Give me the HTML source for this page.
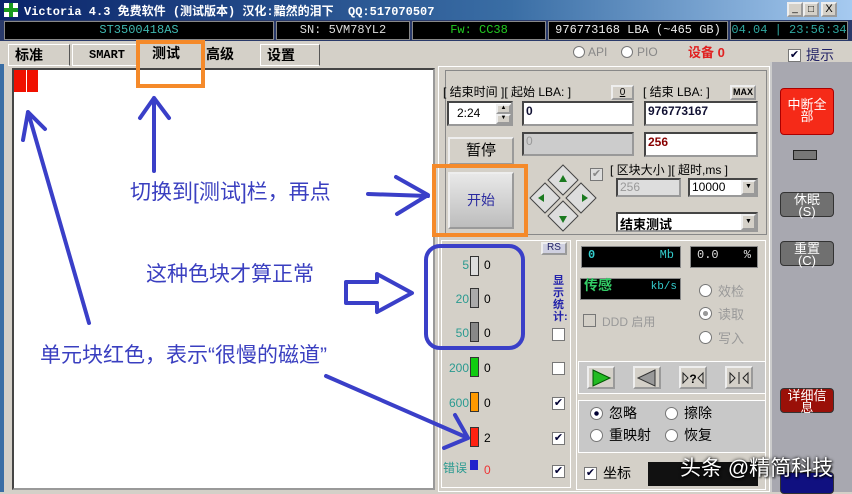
<!DOCTYPE html><html><head><meta charset="utf-8"><style>
*{margin:0;padding:0;box-sizing:border-box}
body{width:852px;height:492px;overflow:hidden;background:#d4d0c8;position:relative;font-family:"Liberation Sans","Noto Sans CJK SC",sans-serif;font-size:12px}
.a{position:absolute;white-space:nowrap}
.blk{background:#000;border:1px solid #888;color:#3fb8b0;font-family:"Liberation Mono","Noto Sans CJK SC",monospace;font-size:12px;text-align:center;line-height:17px}
.in{background:#fff;border:2px inset #999}
.btn{background:#d4d0c8;border:2px outset #eee;text-align:center}
.ann{color:#3a3fc0;font-size:21px;white-space:nowrap}
.rb{position:absolute;border-radius:4px;color:#fff;text-align:center;font-size:13px;line-height:12px;border:1px solid #333}
.chk{position:absolute;width:13px;height:13px;background:#fff;border:1px solid #777;font-size:11px;line-height:11px;text-align:center;color:#003}
.rad{position:absolute;width:13px;height:13px;border-radius:50%;background:#fff;border:1px solid #777}
.lbl{font-size:12px;line-height:14px}
</style></head><body>
<div class="a" style="left:0;top:0;width:852px;height:20px;background:linear-gradient(90deg,#0a246a,#3a6ea5 60%,#a6caf0)"></div>
<div class="a" style="left:4px;top:3px;width:14px;height:14px;background:#fff"><div class="a" style="left:5px;top:0;width:4px;height:14px;background:#1a9a20"></div><div class="a" style="left:0;top:5px;width:14px;height:4px;background:#1a9a20"></div></div>
<div class="a" style="left:24px;top:2px;color:#fff;font-weight:bold;font-size:12px;font-family:'Liberation Mono','Noto Sans CJK SC',monospace">Victoria 4.3 免费软件 (测试版本) 汉化:黯然的泪下 &nbsp;QQ:517070507</div>
<div class="a btn" style="left:787px;top:2px;width:16px;height:15px;font-size:10px;line-height:10px">_</div>
<div class="a btn" style="left:803px;top:2px;width:16px;height:15px;font-size:10px;line-height:11px">□</div>
<div class="a btn" style="left:821px;top:2px;width:16px;height:15px;font-size:11px;line-height:11px">X</div>
<div class="a" style="left:0;top:20px;width:852px;height:21px;background:#2a3a6a"></div>
<div class="a blk" style="left:4px;top:21px;width:270px;height:19px">ST3500418AS</div>
<div class="a blk" style="left:276px;top:21px;width:134px;height:19px;color:#ddd">SN: 5VM78YL2</div>
<div class="a blk" style="left:412px;top:21px;width:134px;height:19px;color:#2c2">Fw: CC38</div>
<div class="a blk" style="left:548px;top:21px;width:180px;height:19px;color:#eee">976773168 LBA (~465 GB)</div>
<div class="a blk" style="left:730px;top:21px;width:118px;height:19px;color:#2fa8a0">04.04 | 23:56:34</div>
<div class="a" style="left:0;top:41px;width:852px;height:25px;background:#d4d0c8"></div>
<div class="a" style="left:8px;top:44px;width:62px;height:22px;border:1px solid #fff;border-right-color:#555;font-weight:bold;font-size:14px;padding-left:6px">标准</div>
<div class="a" style="left:72px;top:44px;width:66px;height:22px;border:1px solid #fff;border-right-color:#555;font-weight:bold;font-size:12px;padding:3px 0 0 16px;font-family:'Liberation Mono',monospace">SMART</div>
<div class="a" style="left:140px;top:41px;width:62px;height:25px;font-weight:bold;font-size:14px;padding:2px 0 0 12px">测试</div>
<div class="a" style="left:204px;top:44px;width:54px;height:22px;font-weight:bold;font-size:14px;padding-left:2px">高级</div>
<div class="a" style="left:260px;top:44px;width:60px;height:22px;border:1px solid #fff;border-right-color:#555;font-weight:bold;font-size:14px;padding-left:6px">设置</div>
<div class="rad" style="left:573px;top:46px;width:12px;height:12px"></div><div class="a" style="left:588px;top:45px;color:#888">API</div>
<div class="rad" style="left:621px;top:46px;width:12px;height:12px"></div><div class="a" style="left:637px;top:45px;color:#888">PIO</div>
<div class="a" style="left:688px;top:42px;color:#e02020;font-weight:bold;font-size:13px">设备 0</div>
<div class="chk" style="left:788px;top:49px">✔</div><div class="a" style="left:806px;top:45px;font-size:14px;color:#226">提示</div>
<div class="a" style="left:0;top:64px;width:4px;height:428px;background:#3a6ea5"></div>
<div class="a" style="left:12px;top:68px;width:423px;height:422px;background:#fff;border:2px inset #999"></div>
<div class="a" style="left:14px;top:70px;width:12px;height:22px;background:#f01000"></div>
<div class="a" style="left:27px;top:70px;width:11px;height:22px;background:#f01000"></div>
<div class="a" style="left:438px;top:66px;width:332px;height:426px;background:#d4d0c8;border:1px solid #fff"></div>
<div class="a" style="left:445px;top:70px;width:322px;height:165px;border:1px solid #888"></div>
<div class="a lbl" style="left:443px;top:85px">[ 结束时间 ][ 起始 LBA: ]</div>
<div class="a btn" style="left:611px;top:85px;width:23px;height:15px;font-size:10px;line-height:11px;text-decoration:underline">0</div>
<div class="a lbl" style="left:643px;top:85px">[ 结束 LBA: ]</div>
<div class="a btn" style="left:730px;top:85px;width:26px;height:15px;font-size:9px;line-height:11px;font-weight:bold">MAX</div>
<div class="a in" style="left:447px;top:101px;width:66px;height:25px;padding:3px 0 0 8px">2:24</div>
<div class="a btn" style="left:496px;top:104px;width:15px;height:10px;font-size:6px;line-height:5px">▲</div>
<div class="a btn" style="left:496px;top:114px;width:15px;height:10px;font-size:6px;line-height:5px">▼</div>
<div class="a in" style="left:522px;top:101px;width:112px;height:25px;font-weight:bold;color:#113;padding:1px 2px">0</div>
<div class="a in" style="left:644px;top:101px;width:114px;height:25px;font-weight:bold;color:#113;padding:1px 2px">976773167</div>
<div class="a in" style="left:522px;top:132px;width:112px;height:24px;background:#ccc;color:#999;padding:0 2px">0</div>
<div class="a in" style="left:644px;top:132px;width:114px;height:25px;font-weight:bold;color:#800;padding:1px 2px">256</div>
<div class="a btn" style="left:448px;top:137px;width:66px;height:28px;font-size:15px;line-height:24px">暂停</div>
<div class="a btn" style="left:448px;top:172px;width:66px;height:57px;font-size:14px;line-height:53px;color:#2a2aa0;background:linear-gradient(#e8e8e8,#bdbdbd)">开始</div>
<svg class="a" style="left:528px;top:163px" width="70" height="72"><g stroke="#444" fill="#ddd"><polygon points="35,2 50,17 35,32 20,17"/><polygon points="17,20 32,35 17,50 2,35"/><polygon points="53,20 68,35 53,50 38,35"/><polygon points="35,38 50,53 35,68 20,53"/></g><g fill="#1a7a20"><polygon points="35,12 39,19 31,19"/><polygon points="10,35 16,31 16,39"/><polygon points="60,35 54,31 54,39"/><polygon points="35,60 39,53 31,53"/></g></svg>
<div class="chk" style="left:590px;top:168px;background:#ddd;color:#888">✔</div>
<div class="a lbl" style="left:610px;top:163px">[ 区块大小 ][ 超时,ms ]</div>
<div class="a in" style="left:616px;top:178px;width:65px;height:19px;background:#ddd;color:#999;padding:0 2px">256</div>
<div class="a in" style="left:688px;top:178px;width:70px;height:19px;padding:0 2px">10000</div>
<div class="a btn" style="left:741px;top:180px;width:15px;height:15px;font-size:7px;line-height:10px">▼</div>
<div class="a in" style="left:616px;top:212px;width:142px;height:20px;font-weight:bold;font-size:13px;padding:0 2px">结束测试</div>
<div class="a btn" style="left:741px;top:214px;width:15px;height:16px;font-size:7px;line-height:11px">▼</div>
<div class="a" style="left:441px;top:240px;width:130px;height:248px;border:1px solid #fff"></div>
<div class="a btn" style="left:541px;top:242px;width:26px;height:13px;font-size:10px;line-height:8px;color:#226;background:#cfd0e0">RS</div>
<div class="a" style="left:449px;top:256px;width:120px;font-size:12px;color:#2a9a90;line-height:14px">
<div class="a" style="left:8px;top:2px;width:12px;text-align:right">5</div><div class="a" style="left:21px;top:0;width:9px;height:20px;background:#ddd;border:1px solid #333"></div><div class="a" style="left:35px;top:2px;color:#000">0</div>
<div class="a" style="left:0;top:36px;width:20px;text-align:right">20</div><div class="a" style="left:21px;top:32px;width:9px;height:20px;background:#aaa;border:1px solid #333"></div><div class="a" style="left:35px;top:36px;color:#000">0</div>
<div class="a" style="left:0;top:70px;width:20px;text-align:right">50</div><div class="a" style="left:21px;top:66px;width:9px;height:20px;background:#888;border:1px solid #333"></div><div class="a" style="left:35px;top:70px;color:#000">0</div>
<div class="a" style="left:-4px;top:105px;width:24px;text-align:right">200</div><div class="a" style="left:21px;top:101px;width:9px;height:20px;background:#1c1;border:1px solid #333"></div><div class="a" style="left:35px;top:105px;color:#000">0</div>
<div class="a" style="left:-4px;top:140px;width:24px;text-align:right">600</div><div class="a" style="left:21px;top:136px;width:9px;height:20px;background:#f90;border:1px solid #333"></div><div class="a" style="left:35px;top:140px;color:#000">0</div>
<div class="a" style="left:21px;top:171px;width:9px;height:20px;background:#f21;border:1px solid #333"></div><div class="a" style="left:35px;top:175px;color:#000">2</div>
<div class="a" style="left:-6px;top:205px">错误</div><div class="a" style="left:21px;top:204px;width:8px;height:10px;background:#22c"></div><div class="a" style="left:35px;top:207px;color:#e33">0</div>
</div>
<div class="a" style="left:553px;top:275px;width:12px;font-size:11px;color:#22a;line-height:12px;font-weight:bold;white-space:normal">显示统计:</div>
<div class="chk" style="left:552px;top:328px"></div>
<div class="chk" style="left:552px;top:362px"></div>
<div class="chk" style="left:552px;top:397px">✔</div>
<div class="chk" style="left:552px;top:432px">✔</div>
<div class="chk" style="left:552px;top:465px">✔</div>
<div class="a" style="left:576px;top:240px;width:190px;height:250px;border:1px solid #fff"></div>
<div class="a blk" style="left:581px;top:246px;width:100px;height:22px;color:#3cc;text-align:left;padding:0 6px;font-weight:bold">0<span style="float:right;font-weight:normal">Mb</span></div>
<div class="a blk" style="left:690px;top:246px;width:68px;height:22px;color:#ddd;text-align:left;padding:0 6px">0.0<span style="float:right">%</span></div>
<div class="a blk" style="left:580px;top:278px;width:101px;height:22px;color:#3c6;text-align:left;padding:0 3px;font-weight:bold;font-size:14px">传感<span style="float:right;font-weight:normal;font-size:11px;color:#3cc">kb/s</span></div>
<div class="rad" style="left:699px;top:284px"></div><div class="a" style="left:718px;top:281px;color:#999;font-size:13px">效检</div>
<div class="rad" style="left:699px;top:307px;background:radial-gradient(#999 30%,#fff 35%)"></div><div class="a" style="left:718px;top:304px;color:#999;font-size:13px">读取</div>
<div class="rad" style="left:699px;top:331px"></div><div class="a" style="left:718px;top:328px;color:#999;font-size:13px">写入</div>
<div class="chk" style="left:583px;top:314px;background:#d4d0c8"></div><div class="a" style="left:602px;top:313px;color:#999;font-size:12px">DDD 启用</div>
<div class="a" style="left:578px;top:361px;width:188px;height:33px;background:#c8c8c8;border:1px solid #fff"></div>
<div class="a btn" style="left:587px;top:366px;width:28px;height:23px"></div><svg class="a" style="left:592px;top:369px" width="20" height="18"><polygon points="1,1 18,9 1,17" fill="#2b2" stroke="#050"/></svg>
<div class="a btn" style="left:633px;top:366px;width:28px;height:23px"></div><svg class="a" style="left:636px;top:369px" width="20" height="18"><polygon points="19,1 2,9 19,17" fill="#999" stroke="#333"/></svg>
<div class="a btn" style="left:679px;top:366px;width:28px;height:23px"></div><svg class="a" style="left:681px;top:369px" width="24" height="18"><g stroke="#222" fill="none"><polygon points="2,4 7,9 2,14"/><polygon points="22,4 17,9 22,14"/></g><text x="12" y="14" font-size="12" font-weight="bold" text-anchor="middle" font-family="Liberation Sans">?</text></svg>
<div class="a btn" style="left:725px;top:366px;width:28px;height:23px"></div><svg class="a" style="left:727px;top:369px" width="24" height="18"><g stroke="#222" fill="none"><polygon points="3,4 8,9 3,14"/><polygon points="21,4 16,9 21,14"/><path d="M12,3V15"/></g></svg>
<div class="a" style="left:578px;top:400px;width:188px;height:53px;background:#c8c8c8;border:1px solid #fff"></div>
<div class="rad" style="left:590px;top:407px;background:radial-gradient(#003 25%,#fff 32%)"></div><div class="a" style="left:609px;top:403px;font-size:14px">忽略</div>
<div class="rad" style="left:665px;top:407px"></div><div class="a" style="left:684px;top:403px;font-size:14px">擦除</div>
<div class="rad" style="left:590px;top:429px"></div><div class="a" style="left:609px;top:425px;font-size:14px">重映射</div>
<div class="rad" style="left:665px;top:429px"></div><div class="a" style="left:684px;top:425px;font-size:14px">恢复</div>
<div class="chk" style="left:584px;top:467px">✔</div><div class="a" style="left:603px;top:463px;font-size:14px">坐标</div>
<div class="a" style="left:648px;top:462px;width:110px;height:24px;background:#111"></div>
<div class="a" style="left:770px;top:62px;width:82px;height:430px;background:#a8a8b0;border-left:2px solid #ccc"></div>
<div class="rb" style="left:780px;top:88px;width:54px;height:47px;background:#f52a18;padding-top:10px;border-color:#a00">中断全<br>部</div>
<div class="a" style="left:793px;top:150px;width:24px;height:10px;background:#777;border:1px solid #222"></div>
<div class="rb" style="left:780px;top:192px;width:54px;height:25px;background:#707070;padding-top:1px">休眠<br>(S)</div>
<div class="rb" style="left:780px;top:241px;width:54px;height:25px;background:#707070;padding-top:1px">重置<br>(C)</div>
<div class="rb" style="left:780px;top:388px;width:54px;height:25px;background:#9a1008;padding-top:1px">详细信<br>息</div>
<div class="rb" style="left:780px;top:472px;width:54px;height:22px;background:#101080"></div>
<div class="a" style="left:136px;top:40px;width:69px;height:48px;border:4px solid #f58a2a"></div>
<div class="a" style="left:432px;top:164px;width:96px;height:73px;border:4px solid #f58a2a"></div>
<div class="a" style="left:424px;top:244px;width:101px;height:106px;border:4px solid #3a3fc8;border-radius:16px"></div>
<svg class="a" style="left:0;top:0" width="852" height="492"><g stroke="#3a3fc8" stroke-width="4" fill="none" stroke-linecap="round" stroke-linejoin="round">
<path d="M154,171V98M140,118L154,98L169,118"/>
<path d="M89,323L28,112M23,140L28,112L45,129"/>
<path d="M368,194L428,196M396,177L428,195L397,214"/>
<path d="M346,282H377V274L412,293L377,312V303H346Z"/>
<path d="M326,376L468,438M444,448L468,438L455,415"/>
</g></svg>
<div class="a ann" style="left:130px;top:176px">切换到[测试]栏，再点</div>
<div class="a ann" style="left:146px;top:258px">这种色块才算正常</div>
<div class="a ann" style="left:40px;top:339px">单元块红色，表示“很慢的磁道”</div>
<div class="a" style="left:680px;top:452px;color:#fff;font-size:21px;text-shadow:0 0 3px #000,1px 1px 2px #000;white-space:nowrap">头条 @精简科技</div>
</body></html>
